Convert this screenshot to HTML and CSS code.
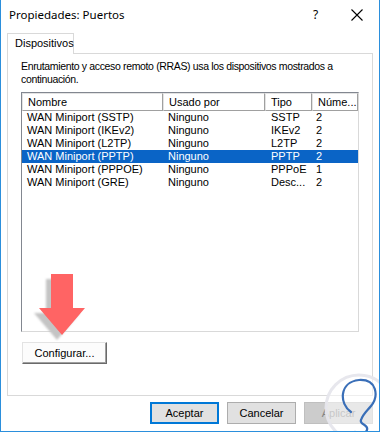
FILE: index.html
```html
<!DOCTYPE html>
<html lang="es">
<head>
<meta charset="utf-8">
<title>Propiedades: Puertos</title>
<link rel="stylesheet" href="styles.css">
</head>
<body>
<div class="window">
  <div class="titlebar">
    <span class="title">Propiedades: Puertos</span>
    <span class="help">?</span>
    <span class="close">
      <svg width="12" height="12" viewBox="0 0 12 12"><path d="M0.5 0.5 L11.5 11.5 M11.5 0.5 L0.5 11.5" stroke="#000" stroke-width="1.1" fill="none"/></svg>
    </span>
  </div>
  <div class="tabs">
    <div class="tab">Dispositivos</div>
  </div>
  <div class="panel">
    <p class="desc">Enrutamiento y acceso remoto (RRAS) usa los dispositivos mostrados a<br>continuación.</p>
    <div class="list">
      <div class="row head">
        <div class="c c1">Nombre</div>
        <div class="c c2">Usado por</div>
        <div class="c c3">Tipo</div>
        <div class="c c4">Núme...</div>
      </div>
      <div class="row"><div class="c c1">WAN Miniport (SSTP)</div><div class="c c2">Ninguno</div><div class="c c3">SSTP</div><div class="c c4">2</div></div>
      <div class="row"><div class="c c1">WAN Miniport (IKEv2)</div><div class="c c2">Ninguno</div><div class="c c3">IKEv2</div><div class="c c4">2</div></div>
      <div class="row"><div class="c c1">WAN Miniport (L2TP)</div><div class="c c2">Ninguno</div><div class="c c3">L2TP</div><div class="c c4">2</div></div>
      <div class="row sel"><div class="c c1">WAN Miniport (PPTP)</div><div class="c c2">Ninguno</div><div class="c c3">PPTP</div><div class="c c4">2</div></div>
      <div class="row"><div class="c c1">WAN Miniport (PPPOE)</div><div class="c c2">Ninguno</div><div class="c c3">PPPoE</div><div class="c c4">1</div></div>
      <div class="row"><div class="c c1">WAN Miniport (GRE)</div><div class="c c2">Ninguno</div><div class="c c3">Desc...</div><div class="c c4">2</div></div>
    </div>
    <div class="cfgrow">
      <button class="btn3d">Configurar...</button>
    </div>
  </div>
  <div class="footer">
    <button class="btn default">Aceptar</button>
    <button class="btn">Cancelar</button>
    <button class="btn disabled">Aplicar</button>
  </div>

  <svg class="arrow" width="70" height="80" viewBox="0 0 70 80">
    <defs>
      <filter id="blur" x="-20%" y="-20%" width="140%" height="140%"><feGaussianBlur stdDeviation="1.2"/></filter>
    </defs>
    <polygon points="24,2 46,2 46,36 58,36 35,63 12,36 24,36" fill="#c4c4c4" filter="url(#blur)" transform="translate(-5,5)"/>
    <polygon points="24,2 46,2 46,36 58,36 35,63 12,36 24,36" fill="#ff6464"/>
  </svg>

  <svg class="logo" width="80" height="80" viewBox="0 0 80 80">
    <circle cx="42" cy="42" r="33" fill="rgba(255,255,255,0.55)" stroke="rgba(230,230,236,0.95)" stroke-width="3"/>
    <path d="M34 46 C 22 38, 22 16, 42 14 C 60 13, 62 30, 54 40 C 50 45, 46 48, 44 54 C 42 59, 52 58, 50 64 C 48 69, 40 68, 38 66" fill="none" stroke="#3a6fb8" stroke-width="2.2" stroke-linecap="round"/>
  </svg>
</div>
</body>
</html>
```

FILE: styles.css
```css
* { box-sizing: border-box; }
html, body { margin: 0; padding: 0; background: #fff; }
body {
  font-family: "Liberation Sans", Arial, sans-serif;
  font-size: 11px;
  color: #000;
}
.window {
  position: relative;
  width: 380px;
  height: 432px;
  border: 1px solid #2b8fdc;
  border-top: none;
  background: #fff;
  display: flex;
  flex-direction: column;
  overflow: hidden;
}
.titlebar {
  height: 33px;
  display: flex;
  align-items: flex-start;
  padding: 7px 0 0 8px;
}
.title {
  font-family: "Noto Sans", "Liberation Sans", sans-serif;
  font-size: 11.5px;
  flex: 1;
  line-height: 16px;
}
.help {
  font-family: "Noto Sans", sans-serif;
  font-size: 12px;
  line-height: 16px;
  width: 38px;
}
.close {
  width: 28px;
  padding-top: 2px;
}
.tabs {
  display: flex;
  padding-left: 6px;
  height: 20px;
}
.tab {
  width: 67px;
  height: 21px;
  border: 1px solid #d9d9d9;
  border-bottom: none;
  background: #fff;
  padding: 3px 0 0 7px;
  position: relative;
  z-index: 1;
  font-size: 11px;
}
.panel {
  margin-left: 6px;
  width: 366px;
  height: 343px;
  border: 1px solid #d9d9d9;
  padding: 6px 13px 0 13px;
  display: flex;
  flex-direction: column;
}
.desc {
  margin: 0;
  font-size: 10.5px;
  line-height: 13px;
  height: 32px;
  white-space: nowrap;
  letter-spacing: -0.35px;
}
.list {
  width: 338px;
  height: 240px;
  border: 1px solid #828790;
  border-right-color: #d9d9d9;
  border-bottom-color: #d9d9d9;
  background: #fff;
}
.row {
  display: flex;
  height: 13px;
  line-height: 13px;
  white-space: nowrap;
}
.row.head {
  height: 18px;
  line-height: 16px;
}
.head .c {
  border: 1px solid #a0a0a0;
  border-left-color: #e3e3e3;
  border-top-color: #e3e3e3;
  padding-left: 5px;
}
.c { overflow: hidden; padding-left: 5px; }
.c1 { width: 141px; }
.c2 { width: 102px; }
.c3 { width: 47px; padding-left: 6px; }
.c4 { width: 46px; padding-left: 4px; }
.row.sel { background: #0a64c6; color: #fff; }
.cfgrow {
  padding-top: 10px;
}
.btn3d {
  font-family: "Liberation Sans", Arial, sans-serif;
  font-size: 11px;
  width: 85px;
  height: 22px;
  background: #fcfcfc;
  border: 1px solid #e3e3e3;
  border-right-color: #6a6a6a;
  border-bottom-color: #6a6a6a;
  box-shadow: inset -1px -1px 0 #a0a0a0;
  padding: 0;
  margin-left: 1px;
}
.footer {
  display: flex;
  justify-content: flex-end;
  gap: 8px;
  padding: 6px 6px 0 0;
}
.btn {
  font-family: "Liberation Sans", Arial, sans-serif;
  font-size: 11px;
  width: 69px;
  height: 22px;
  background: #e1e1e1;
  border: 1px solid #adadad;
  padding: 0;
  color: #000;
}
.btn.default { border: 2px solid #0078d7; }
.btn.disabled { background: #cccccc; border-color: #bfbfbf; color: #838383; }
.arrow {
  position: absolute;
  left: 26px;
  top: 272px;
}
.logo {
  position: absolute;
  left: 316px;
  top: 366px;
}
```
